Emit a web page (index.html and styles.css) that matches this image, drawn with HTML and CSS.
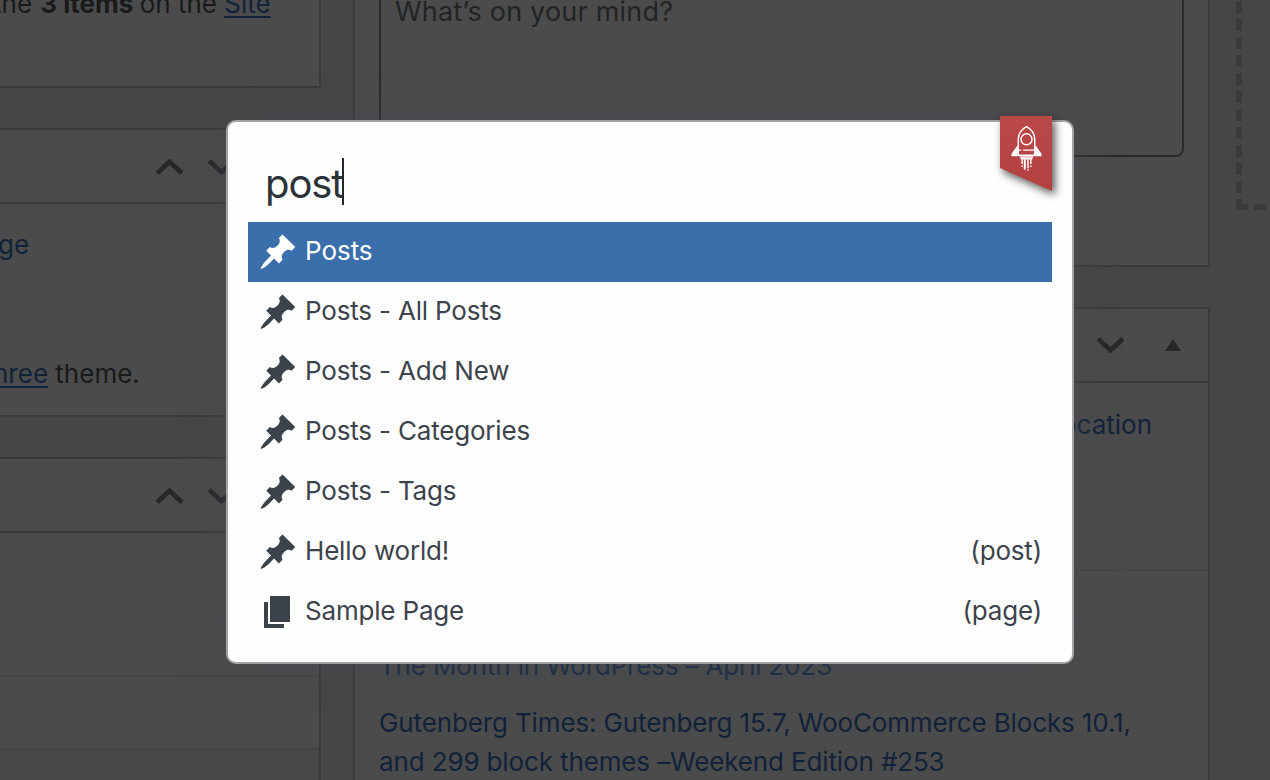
FILE: index.html
```html
<!DOCTYPE html>
<html lang="en">
<head>
<meta charset="utf-8">
<title>Dashboard</title>
<link rel="stylesheet" href="styles.css">
</head>
<body>
<svg class="defs" width="0" height="0">
  <symbol id="pin" viewBox="0 0 20 20"><path d="M10.44 3.02l1.82-1.82 6.36 6.35-1.83 1.82c-1.05-.68-2.48-.57-3.41.36l-.75.75c-.92.93-1.04 2.35-.35 3.41l-1.83 1.82-2.41-2.41-2.8 2.79c-.42.42-3.38 2.71-3.8 2.29s1.86-3.39 2.28-3.81l2.79-2.79L4.1 9.36l1.83-1.82c1.05.69 2.48.57 3.4-.36l.75-.75c.93-.92 1.05-2.35.36-3.41z"/></symbol>
  <symbol id="page" viewBox="0 0 20 20"><path d="M6 15V2h10v13H6zm-1 1h8v2H3V5h2v11z"/></symbol>
  <symbol id="up" viewBox="0 0 28 16"><path d="M2.100 14.200L14.500 2.800L26.900 14.200" fill="none" stroke="currentColor" stroke-width="4.600"/></symbol>
  <symbol id="down" viewBox="0 0 28 16"><path d="M2.100 1.800L14.500 13.200L26.900 1.800" fill="none" stroke="currentColor" stroke-width="4.600"/></symbol>
</svg>
<main class="dashboard">
  <div class="column left">
    <section class="panel glance"><p class="line"><span>the </span><b>3 items</b><span> on the </span><a class="underlined">Site</a></p></section>
    <section class="panel activity">
      <header class="bar"><svg class="chev"><use href="#up"/></svg><svg class="chev"><use href="#down"/></svg></header>
      <p class="line"><a>ge</a></p>
      <p class="line theme"><a class="underlined">hree</a> theme.</p>
    </section>
    <section class="panel feed">
      <header class="bar"><svg class="chev"><use href="#up"/></svg><svg class="chev"><use href="#down"/></svg></header>
      <div class="slot first"></div><div class="slot"></div><div class="slot tinted"></div>
    </section>
  </div>
  <div class="column middle">
    <section class="panel draft"><div class="textarea">What’s on your mind?</div></section>
    <section class="panel news">
      <header class="bar"><svg class="chev"><use href="#down"/></svg><svg class="tri" viewBox="0 0 16 12"><path d="M8 0L16 12H0Z"/></svg></header>
      <div class="event"><a>location</a></div>
      <div class="links">
        <a class="month">The Month in WordPress – April 2023</a>
        <a class="guten">Gutenberg Times: Gutenberg 15.7, WooCommerce Blocks 10.1,<br><span class="second">and 299 block themes –Weekend Edition #253</span></a>
      </div>
    </section>
  </div>
  <div class="column right"><div class="dropzone"></div></div>
</main>
<div class="modal">
  <div class="ribbon-wrap"><div class="ribbon">
    <svg class="rocket" viewBox="0 0 32 48" fill="none" stroke="#fff" stroke-width="1.500">
      <path d="M7.500 31V14.500C7.500 8 11 4 16 1.500C21 4 24.500 8 24.500 14.500V31Z"/>
      <circle cx="16" cy="14.500" r="5.700"/>
      <path d="M7 20.500V32H.5V29.500ZM25 20.500V32H31.500V29.500Z" fill="#fff" stroke="none"/>
      <path d="M7.500 25.700H10.500M12.500 25.700H24M9 32.700H23M10 34.500H22"/>
      <path d="M11.500 35V40M11.500 41.500V43M14.500 35V45M17.500 35V44.500M17.500 45.500V47M20.500 35V40M20.500 41.500V43M14 35V46"/>
    </svg></div></div>
  <div class="search">post<span class="caret"></span></div>
  <ul class="results">
    <li class="selected"><svg><use href="#pin"/></svg><span>Posts</span></li>
    <li><svg><use href="#pin"/></svg><span>Posts - All Posts</span></li>
    <li><svg><use href="#pin"/></svg><span>Posts - Add New</span></li>
    <li><svg><use href="#pin"/></svg><span>Posts - Categories</span></li>
    <li><svg><use href="#pin"/></svg><span>Posts - Tags</span></li>
    <li><svg><use href="#pin"/></svg><span>Hello world!</span><span class="type">(post)</span></li>
    <li><svg><use href="#page"/></svg><span>Sample Page</span><span class="type">(page)</span></li>
  </ul>
</div>
</body>
</html>
```
FILE: styles.css
```css
* { box-sizing: border-box; }
body { margin: 0; width: 1270px; height: 780px; overflow: hidden; background: #464646; color: #181a1b; font: 26px/38px Inter, "Liberation Sans", sans-serif; }
.defs { position: absolute; }
p { margin: 0; }
a { color: #122239; }
.underlined { text-decoration: underline; text-decoration-thickness: 2px; text-underline-offset: 3px; }
.dashboard { display: grid; grid-template-columns: 321px 857px 34px; column-gap: 32px; height: 780px; overflow: hidden; }
.column { display: flex; flex-direction: column; }
.left { gap: 40px; }
.middle { gap: 40px; }
.right { margin-left: -6px; }
.panel { background: #4b4b4b; border: 2px solid #3a3a3a; flex: none; overflow: hidden; white-space: nowrap; }
.left .panel { border-left: 0; }
.bar { height: 74px; border-bottom: 2px solid #3a3a3a; display: flex; align-items: center; color: #262728; }
.chev { width: 28px; height: 16px; flex: none; }
.left .bar { padding: 2px 0 0 155px; gap: 24px; }
.glance { height: 88px; border-top: 0; }
.glance .line { margin: -15px 0 0 -7px; white-space: pre; }
.glance b { margin-left: 1px; margin-right: -1px; }
.activity { height: 289px; }
.activity .line { margin-top: 22px; margin-left: -2px; }
.activity .theme { margin-top: 91px; margin-left: -7px; }
.feed { height: 340px; border-bottom: 0; }
.slot { height: 73px; border-bottom: 2px solid #444444; }
.slot.first { height: 144px; }
.slot.tinted { background: #474948; }
.draft { height: 267px; border-top: 0; padding: 0 24px; }
.textarea { height: 157px; border: 2px solid #292a2b; border-top: 0; border-radius: 0 0 8px 8px; padding: 0 14px; line-height: 24px; color: #222425; font-size: 27px; letter-spacing: .2px; }
.news { height: 500px; border-bottom: 0; }
.news .bar { justify-content: flex-end; padding-right: 27px; gap: 41px; }
.tri { width: 16px; height: 12px; fill: #262728; margin-top: -1px; }
.event { height: 188px; border-bottom: 2px solid #464646; padding: 23px 56px 0 0; text-align: right; }
.links { padding: 75px 24px 0; display: flex; flex-direction: column; gap: 18px; line-height: 39px; letter-spacing: -.13px; }
.month { color: #192a42; letter-spacing: -.16px; }
.dropzone { height: 210px; background: repeating-linear-gradient(#3a3a3a 0 12px, transparent 12px 18px) 0 -17px / 6px 227px no-repeat, repeating-linear-gradient(90deg, #3a3a3a 0 12px, transparent 12px 18px) 0 204px / 40px 6px no-repeat; }
.modal { position: absolute; left: 226px; top: 120px; width: 848px; height: 544px; border: 2px solid #a2a4a5; border-radius: 10px; background: #fefefe; color: #3c434a; padding: 20px; box-shadow: 0 0 40px rgba(66, 74, 84, .6); }
.search { height: 80px; padding: 16px 18px 12px 17px; display: flex; align-items: center; font-size: 40px; line-height: 48px; color: #2c3338; letter-spacing: -1.1px; }
.caret { width: 2px; height: 47px; background: #23282d; margin-left: -1px; margin-top: -5px; }
.results { list-style: none; margin: 0; padding: 0; }
.results li { height: 60px; display: flex; align-items: center; gap: 7px; padding: 0 10px; line-height: 58px; letter-spacing: -.18px; }
.results li span { margin-top: -2px; }
.results svg { width: 40px; height: 40px; fill: currentColor; flex: none; }
.results .selected { background: #3b6fac; color: #fff; letter-spacing: -.05px; }
.results .type { margin-left: auto; }
.ribbon-wrap { position: absolute; right: 20px; top: -6px; filter: drop-shadow(3px 4px 4px rgba(0, 0, 0, .65)); }
.ribbon { width: 52px; height: 75px; background: linear-gradient(#ba4949, #b44040); clip-path: polygon(0 0, 100% 0, 100% 100%, 0 52px); padding: 9px 0 0 11px; }
.rocket { display: block; width: 31px; height: 47px; }
```
